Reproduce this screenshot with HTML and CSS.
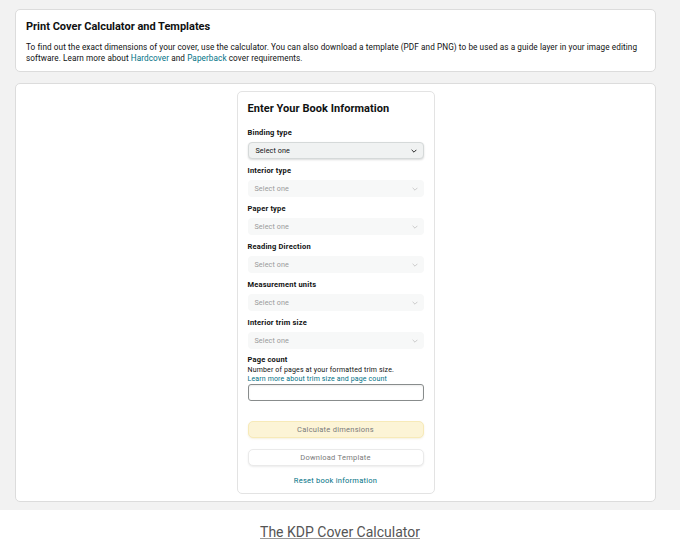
FILE: index.html
```html
<!DOCTYPE html>
<html>
<head>
<meta charset="utf-8">
<link rel="stylesheet" href="styles.css">
</head>
<body>
<div class="page">
  <section class="card intro">
    <h1>Print Cover Calculator and Templates</h1>
    <p>To find out the exact dimensions of your cover, use the calculator. You can also download a template (PDF and PNG) to be used as a guide layer in your image editing software. Learn more about <a href="#">Hardcover</a> and <a href="#">Paperback</a> cover requirements.</p>
  </section>
  <section class="card calc">
    <div class="panel">
      <h2>Enter Your Book Information</h2>
      <div class="field">
        <label>Binding type</label>
        <div class="select active"><span>Select one</span><svg viewBox="0 0 10 6" class="chev"><path d="M1 1l4 4 4-4" fill="none" stroke="#222" stroke-width="1.6"/></svg></div>
      </div>
      <div class="field">
        <label>Interior type</label>
        <div class="select"><span>Select one</span><svg viewBox="0 0 10 6" class="chev"><path d="M1 1l4 4 4-4" fill="none" stroke="#bbb" stroke-width="1.2"/></svg></div>
      </div>
      <div class="field">
        <label>Paper type</label>
        <div class="select"><span>Select one</span><svg viewBox="0 0 10 6" class="chev"><path d="M1 1l4 4 4-4" fill="none" stroke="#bbb" stroke-width="1.2"/></svg></div>
      </div>
      <div class="field">
        <label>Reading Direction</label>
        <div class="select"><span>Select one</span><svg viewBox="0 0 10 6" class="chev"><path d="M1 1l4 4 4-4" fill="none" stroke="#bbb" stroke-width="1.2"/></svg></div>
      </div>
      <div class="field">
        <label>Measurement units</label>
        <div class="select"><span>Select one</span><svg viewBox="0 0 10 6" class="chev"><path d="M1 1l4 4 4-4" fill="none" stroke="#bbb" stroke-width="1.2"/></svg></div>
      </div>
      <div class="field">
        <label>Interior trim size</label>
        <div class="select"><span>Select one</span><svg viewBox="0 0 10 6" class="chev"><path d="M1 1l4 4 4-4" fill="none" stroke="#bbb" stroke-width="1.2"/></svg></div>
      </div>
      <div class="field pages">
        <label>Page count</label>
        <div class="hint">Number of pages at your formatted trim size.</div>
        <a href="#" class="hint-link">Learn more about trim size and page count</a>
        <div class="input"></div>
      </div>
      <div class="btn calc-btn">Calculate dimensions</div>
      <div class="btn dl-btn">Download Template</div>
      <a href="#" class="reset">Reset book information</a>
    </div>
  </section>
</div>
<div class="caption"><a href="#">The KDP Cover Calculator</a></div>
</body>
</html>
```
FILE: styles.css
```css
* { box-sizing: border-box; }
html, body { margin: 0; padding: 0; background: #fff; }
body { font-family: Roboto, "Liberation Sans", sans-serif; color: #0f1111; width: 680px; }
.page {
  background: #f2f2f2;
  padding: 9px 24px 8px 15px;
  display: flex;
  flex-direction: column;
  gap: 11px;
}
.card {
  background: #fff;
  border: 1px solid #dcdcdc;
  border-radius: 5px;
}
.intro { height: 63px; padding: 10px 10px 0 10px; }
.intro h1 { margin: 0; font-size: 11px; font-weight: 700; line-height: 14px; letter-spacing: 0; }
.intro p { margin: 8px 0 0; font-size: 8.2px; line-height: 11px; letter-spacing: 0.08px; }
.intro a { color: #007185; text-decoration: none; }
.calc { height: 419px; padding-top: 7px; display: flex; justify-content: center; }
.panel {
  width: 198px;
  height: 403px;
  border: 1px solid #e3e3e3;
  border-radius: 5px;
  padding: 10px 10px 0 10px;
  display: flex;
  flex-direction: column;
}
.panel h2 { margin: 0 0 12px; font-size: 11px; line-height: 14px; font-weight: 700; letter-spacing: 0.05px; }
.field { display: flex; flex-direction: column; margin-bottom: 7px; }
.field label { font-size: 7.5px; font-weight: 700; line-height: 10px; margin-bottom: 4px; letter-spacing: 0.2px; }
.select {
  height: 17px;
  border-radius: 4px;
  background: #f7f8f8;
  display: flex;
  align-items: center;
  justify-content: space-between;
  padding: 0 6px 0 7px;
  font-size: 7.2px;
  letter-spacing: 0.1px;
  color: #9a9a9a;
}
.select.active {
  background: #f0f2f2;
  border: 1px solid #d5d9d9;
  box-shadow: 0 1px 2px rgba(15,17,17,0.15);
  color: #0f1111;
}
.chev { width: 6px; height: 4px; }
.pages { margin-top: -1px; margin-bottom: 0; }
.pages label { margin-bottom: 1px; }
.hint { font-size: 7px; line-height: 9px; letter-spacing: 0.15px; }
.hint-link { font-size: 7px; line-height: 9px; color: #007185; text-decoration: none; letter-spacing: 0.15px; }
.input { height: 17px; border: 1px solid #888c8c; border-radius: 3px; margin-top: 0; box-shadow: inset 0 1px 2px rgba(0,0,0,0.08); }
.btn {
  height: 17px;
  border-radius: 5px;
  font-size: 7.5px;
  letter-spacing: 0.25px;
  display: flex;
  align-items: center;
  justify-content: center;
  color: #7a7a7a;
}
.calc-btn { margin-top: 20px; background: #fcf4d6; border: 1px solid #f7eab8; box-shadow: 0 1px 2px rgba(200,180,100,0.2); }
.dl-btn { margin-top: 11px; background: #fff; border: 1px solid #eaeaea; box-shadow: 0 1px 2px rgba(0,0,0,0.08); }
.reset { margin-top: 10px; text-align: center; font-size: 7.5px; color: #007185; text-decoration: none; line-height: 10px; letter-spacing: 0.25px; }
.caption { text-align: center; padding-top: 14px; line-height: 16px; }
.caption a { font-size: 14px; color: #555; text-decoration: underline; text-decoration-color: #999; letter-spacing: 0; }
```
